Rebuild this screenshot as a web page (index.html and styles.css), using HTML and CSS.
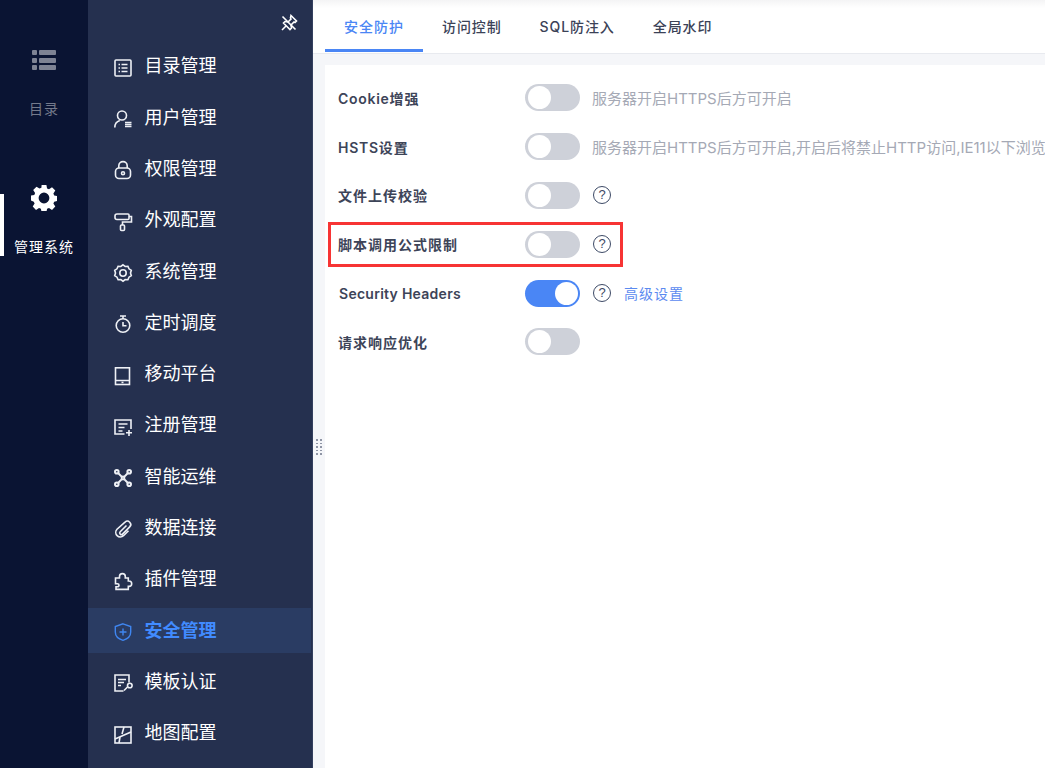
FILE: index.html
```html
<!DOCTYPE html>
<html lang="zh-CN">
<head>
<meta charset="utf-8">
<title>安全管理</title>
<link rel="stylesheet" href="styles.css">
</head>
<body>
<div class="app">
  <nav class="rail">
    <a class="rail-item">
      <svg class="rail-icon" viewBox="0 0 26 22" width="26" height="22"><g fill="#7e8394"><rect x="1" y="1" width="5" height="5" rx="1"/><rect x="1" y="9" width="5" height="5" rx="1"/><rect x="1" y="16" width="5" height="5" rx="1"/><rect x="8" y="1" width="17" height="5" rx="1"/><rect x="8" y="9" width="17" height="5" rx="1"/><rect x="8" y="16" width="17" height="5" rx="1"/></g></svg>
      <span class="rail-label">目录</span>
    </a>
    <a class="rail-item rail-item-active">
      <svg class="rail-icon" viewBox="0 0 26 26" width="26" height="26"><path fill="#fff" fill-rule="evenodd" d="M10.6 0h4.8l.7 3.4 1.9.8 3-1.9 3.300 3.300-1.900 3 .8 1.900 3.300.7v4.800l-3.300.7-.8 1.900 1.900 3-3.300 3.300-3-1.900-1.900.8-.7 3.300h-4.800l-.7-3.300-1.900-.8-3 1.900-3.300-3.300 1.900-3-.8-1.900L0 15.400v-4.800l3.300-.7.8-1.900-1.900-3 3.300-3.300 3 1.900 1.900-.8zM13 7.600a5.400 5.400 0 1 0 0 10.800 5.400 5.400 0 0 0 0-10.800z"/></svg>
      <span class="rail-label">管理系统</span>
    </a>
  </nav>

  <aside class="side">
    <div class="pin">
      <svg viewBox="0 0 18 18" width="18" height="18" fill="none" stroke="#fff" stroke-width="1.600"><path d="M11 1.500l5.500 5.500-1.500 1.500-1-.5-3 3 .5 3-1.500 1.500-6.500-6.500 1.500-1.500 3 .5 3-3-.5-1z"/><path d="M6 12l-4 4M2.500 2.500l13 13"/></svg>
    </div>
    <ul class="menu">
      <li class="menu-item"><svg class="mi" viewBox="0 0 18 18"><rect x="1" y="1" width="16" height="16" rx="1"/><path d="M4.500 5.500h1.500M7.500 5.500h6M4.500 9h1.500M7.500 9h6M4.500 12.500h1.500M7.500 12.500h6"/></svg><span>目录管理</span></li>
      <li class="menu-item"><svg class="mi" viewBox="0 0 18 18"><circle cx="8" cy="5.500" r="4.500"/><path d="M.8 17.500c0-3.500 2-6 5-7M11 12.500h6.500M11 14.500h6.500M11 16.500h6.500"/></svg><span>用户管理</span></li>
      <li class="menu-item"><svg class="mi" viewBox="0 0 18 18"><rect x="1.500" y="7" width="15" height="10.500" rx="3.500"/><path d="M4.800 7V4.800a4.200 4.200 0 0 1 8.400 0V7"/><circle cx="9" cy="12.200" r="1.500"/></svg><span>权限管理</span></li>
      <li class="menu-item"><svg class="mi" viewBox="0 0 18 18"><path d="M3 1h11a1 1 0 0 1 1 1v3.500a1 1 0 0 1-1 1H3A2 2 0 0 1 1 4.500V3a2 2 0 0 1 2-2zM15 3.500h2.500v5.500H8.500v3"/><rect x="6.500" y="12" width="4" height="5.500" rx="1"/></svg><span>外观配置</span></li>
      <li class="menu-item"><svg class="mi" viewBox="0 0 18 18"><path d="M9 .8l2.200 1.700 2.700-.2 1.100 2.500 2.300 1.500L16.500 9l.8 2.700-2.300 1.500-1.100 2.500-2.700-.2L9 17.200l-2.200-1.700-2.700.2L3 13.200.7 11.700 1.500 9 .7 6.300 3 4.800l1.100-2.500 2.700.2z"/><circle cx="9" cy="9" r="3.200"/></svg><span>系统管理</span></li>
      <li class="menu-item"><svg class="mi" viewBox="0 0 18 18"><path d="M6 1h6M9 1v3"/><circle cx="9" cy="10.500" r="6.800"/><path d="M9 7v3.800h3.500"/></svg><span>定时调度</span></li>
      <li class="menu-item"><svg class="mi" viewBox="0 0 18 18"><rect x="1.500" y=".8" width="14" height="16.700"/><path d="M1.500 13.500h14M7.500 15.500h2"/></svg><span>移动平台</span></li>
      <li class="menu-item"><svg class="mi" viewBox="0 0 18 18"><path d="M10.500 16H1V2h16v9M4.500 6h9M4.500 9.500h6M4.500 13h4M12 14.800h6M15 12v6"/></svg><span>注册管理</span></li>
      <li class="menu-item"><svg class="mi mi-net" viewBox="0 0 18 18"><circle cx="2.800" cy="2.800" r="1.800"/><circle cx="15.200" cy="2.800" r="1.800"/><circle cx="2.800" cy="15.200" r="1.800"/><circle cx="15.200" cy="15.200" r="1.800"/><circle cx="9" cy="9" r="1.400"/><path d="M4.300 4.300l3.800 3.800M13.700 4.300l-3.800 3.800M4.300 13.700l3.800-3.800M13.700 13.700l-3.800-3.800"/></svg><span>智能运维</span></li>
      <li class="menu-item"><svg class="mi" viewBox="0 0 18 18"><path d="M12.500 5.500l-6.300 6.300a1.600 1.600 0 0 0 2.300 2.300l7.200-7.200a3.300 3.300 0 0 0-4.700-4.700L3 9.200a4.600 4.600 0 0 0 6.500 6.500l5-5"/></svg><span>数据连接</span></li>
      <li class="menu-item"><svg class="mi mi-wide" viewBox="0 0 20 18"><path d="M5.500 6V4.500a2.900 2.900 0 0 1 5.800 0V6h3v3h.7a2.700 2.700 0 0 1 0 5.400h-.7v3H2v-2.600h1.500a1.500 1.500 0 0 0 0-3H1.500V6z"/></svg><span>插件管理</span></li>
      <li class="menu-item menu-item-active"><svg class="mi" viewBox="0 0 18 18"><path d="M9 .8l7.700 2.700V9c0 4.200-3.300 7-7.700 8.300C4.600 16 1.300 13.200 1.300 9V3.500z"/><path d="M9 5.500v7M5.500 9h7"/></svg><span>安全管理</span></li>
      <li class="menu-item"><svg class="mi mi-wide" viewBox="0 0 20 18"><path d="M9.500 17H1V1h14v7.500M4 5.500h8M4 8.500h6M4 11.500h3M10 16.500l3.500-3.500"/><circle cx="15.800" cy="11.500" r="2.300"/></svg><span>模板认证</span></li>
      <li class="menu-item"><svg class="mi" viewBox="0 0 18 18"><rect x="1" y="1" width="16" height="16"/><path d="M10 1L8 8M1 13l16-7M6 11l-1 6"/></svg><span>地图配置</span></li>
    </ul>
  </aside>

  <main class="main">
    <div class="grip"><i></i><i></i><i></i><i></i><i></i><i></i><i></i><i></i><i></i><i></i></div>
    <div class="tabs">
      <a class="tab tab-active">安全防护</a>
      <a class="tab">访问控制</a>
      <a class="tab">SQL防注入</a>
      <a class="tab">全局水印</a>
    </div>
    <section class="card">
      <div class="row"><label class="name"><span class="lat">Cookie</span>增强</label><span class="sw"></span><span class="hint">服务器开启HTTPS后方可开启</span></div>
      <div class="row"><label class="name"><span class="lat">HSTS</span>设置</label><span class="sw"></span><span class="hint">服务器开启HTTPS后方可开启,开启后将禁止HTTP访问,IE11以下浏览</span></div>
      <div class="row"><label class="name">文件上传校验</label><span class="sw"></span><span class="help">?</span></div>
      <div class="row row-marked"><label class="name">脚本调用公式限制</label><span class="sw"></span><span class="help">?</span></div>
      <div class="row"><label class="name name-latin">Security Headers</label><span class="sw sw-on"></span><span class="help">?</span><a class="link">高级设置</a></div>
      <div class="row"><label class="name">请求响应优化</label><span class="sw"></span></div>
    </section>
  </main>
</div>
</body>
</html>
```

FILE: styles.css
```css
*, *::before, *::after { box-sizing: border-box; }
html, body { margin: 0; height: 100%; overflow: hidden; }
body { font-family: Inter, "Noto Sans CJK SC", sans-serif; background: #f5f6f9; }
ul { list-style: none; margin: 0; padding: 0; }

.app { display: flex; width: 1045px; height: 768px; overflow: hidden; }

.rail { width: 88px; flex: none; background: #0a1433; padding-top: 49px; display: flex; flex-direction: column; gap: 82px; }
.rail-item { display: flex; flex-direction: column; align-items: center; height: 63px; }
.rail-icon { display: block; flex: none; }
.rail-label { font-size: 14px; line-height: 20px; margin-top: 28px; color: #747a8b; letter-spacing: 1px; }
.rail-item-active { border-left: 4px solid #fff; padding-right: 4px; height: 62px; }
.rail-item-active .rail-icon { margin-top: -9px; }
.rail-item-active .rail-label { color: #fff; margin-top: 26px; font-size: 14px; }

.side { width: 225px; flex: none; background: #25304f; border-right: 1px solid #34405f; padding-top: 14px; }
.pin { height: 18px; padding-left: 192px; margin-bottom: 11.300px; }
.pin svg { display: block; }
.menu { display: flex; flex-direction: column; gap: 6.300px; }
.menu-item { height: 45px; display: flex; align-items: center; padding-left: 26px; gap: 13px; color: #fff; font-size: 18px; width: 223px; }
.menu-item span { position: relative; top: -1.400px; left: -.5px; }
.mi { width: 18px; height: 18px; flex: none; fill: none; stroke: #eef0f5; stroke-width: 1.600; position: relative; top: 2px; overflow: visible; }
.mi-wide { width: 20px; margin-right: -2px; }
.mi-net { stroke-width: 2; }
.menu-item-active { background: #2a3c63; color: #418bff; font-weight: 700; }
.menu-item-active span { top: -1px; }
.menu-item-active .mi { stroke: #3f86f0; stroke-width: 1.400; }

.main { flex: 1; min-width: 0; position: relative; display: flex; flex-direction: column; }
.grip { position: absolute; left: 3px; top: 439px; width: 6px; display: grid; grid-template-columns: 2px 2px; gap: 2px; justify-content: space-between; }
.grip i { width: 2px; height: 1.500px; background: #8f95a5; }

.tabs { height: 54px; flex: none; display: flex; padding-left: 12px; background: linear-gradient(#f4f4f5, #fff 8px); border-bottom: 1px solid #e8eaef; }
.tab { height: 52px; padding: 0 19px; font-size: 14px; font-weight: 500; letter-spacing: .9px; color: #3b4257; border-bottom: 3px solid transparent; line-height: 54px; }
.tab-active { color: #4a86f5; border-bottom-color: #4a86f5; letter-spacing: 1px; }

.card { flex: 1; margin: 11px 0 0 12px; background: #fff; padding: 19.400px 0 0 13px; display: flex; flex-direction: column; gap: 21.800px; }
.row { height: 27px; display: flex; align-items: center; white-space: nowrap; position: relative; }
.name { width: 187px; flex: none; font-size: 14px; font-weight: 600; letter-spacing: 1px; color: #3d4458; }
.lat { letter-spacing: .7px; }
.name-latin { padding-left: 1px; letter-spacing: .27px; }
.sw { width: 55px; height: 27px; flex: none; border-radius: 14px; background: #ced1d9; position: relative; }
.sw::after { content: ""; position: absolute; left: 3px; top: 2px; width: 23px; height: 23px; border-radius: 50%; background: #fff; }
.sw-on { background: #4a86f5; }
.sw-on::after { left: 30px; }
.hint { margin-left: 12px; font-size: 15px; color: #a5a9b5; }
.help { margin-left: 13px; width: 18px; height: 18px; border: 1.500px solid #3d4a66; border-radius: 50%; font-size: 13px; line-height: 15px; text-align: center; color: #3d4a66; flex: none; font-family: "Liberation Sans", sans-serif; }
.link { margin-left: 13px; font-size: 14px; color: #5b8af0; letter-spacing: 1px; }
.row-marked::after { content: ""; position: absolute; left: -10px; top: -9px; width: 295px; height: 45px; border: 3px solid #f73434; }
```
